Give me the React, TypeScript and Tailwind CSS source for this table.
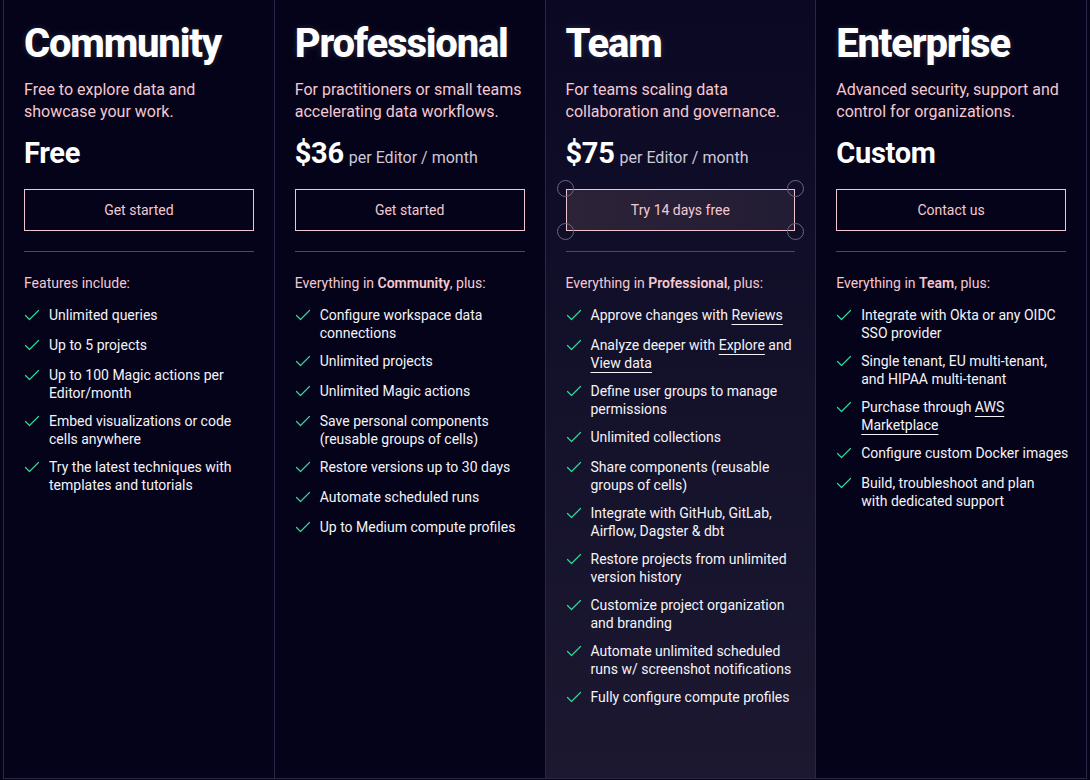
import type { ReactNode } from 'react';

type Plan = {
  name: string;
  blurb: [string, string];
  price: string;
  unit?: string;
  cta: string;
  lead: ReactNode;
  items: ReactNode[];
  featured?: boolean;
};

const Link = ({ children }: { children: ReactNode }) => (
  <span className="underline decoration-1 underline-offset-[4px]">{children}</span>
);

// line breaks follow the reference layout
const plans: Plan[] = [
  {
    name: 'Community',
    blurb: ['Free to explore data and', 'showcase your work.'],
    price: 'Free',
    cta: 'Get started',
    lead: <>Features include:</>,
    items: [
      'Unlimited queries',
      'Up to 5 projects',
      'Up to 100 Magic actions per\nEditor/month',
      'Embed visualizations or code\ncells anywhere',
      'Try the latest techniques with\ntemplates and tutorials',
    ],
  },
  {
    name: 'Professional',
    blurb: ['For practitioners or small teams', 'accelerating data workflows.'],
    price: '$36',
    unit: 'per Editor / month',
    cta: 'Get started',
    lead: (
      <>
        Everything in <b className="font-semibold">Community</b>, plus:
      </>
    ),
    items: [
      'Configure workspace data\nconnections',
      'Unlimited projects',
      'Unlimited Magic actions',
      'Save personal components\n(reusable groups of cells)',
      'Restore versions up to 30 days',
      'Automate scheduled runs',
      'Up to Medium compute profiles',
    ],
  },
  {
    name: 'Team',
    blurb: ['For teams scaling data', 'collaboration and governance.'],
    price: '$75',
    unit: 'per Editor / month',
    cta: 'Try 14 days free',
    featured: true,
    lead: (
      <>
        Everything in <b className="font-semibold">Professional</b>, plus:
      </>
    ),
    items: [
      <>
        Approve changes with <Link>Reviews</Link>
      </>,
      <>
        Analyze deeper with <Link>Explore</Link> and
        <br />
        <Link>View data</Link>
      </>,
      'Define user groups to manage\npermissions',
      'Unlimited collections',
      'Share components (reusable\ngroups of cells)',
      'Integrate with GitHub, GitLab,\nAirflow, Dagster & dbt',
      'Restore projects from unlimited\nversion history',
      'Customize project organization\nand branding',
      'Automate unlimited scheduled\nruns w/ screenshot notifications',
      'Fully configure compute profiles',
    ],
  },
  {
    name: 'Enterprise',
    blurb: ['Advanced security, support and', 'control for organizations.'],
    price: 'Custom',
    cta: 'Contact us',
    lead: (
      <>
        Everything in <b className="font-semibold">Team</b>, plus:
      </>
    ),
    items: [
      'Integrate with Okta or any OIDC\nSSO provider',
      'Single tenant, EU multi-tenant,\nand HIPAA multi-tenant',
      <>
        Purchase through <Link>AWS</Link>
        <br />
        <Link>Marketplace</Link>
      </>,
      'Configure custom Docker images',
      'Build, troubleshoot and plan\nwith dedicated support',
    ],
  },
];

function CheckMark() {
  return (
    <svg width="16" height="20" viewBox="0 0 16 20" fill="none" className="shrink-0 relative -top-[1px]">
      <path d="M1.5 10.5 L5.5 14.5 L14.5 5.5" stroke="#36d49b" strokeWidth="1.2" strokeLinecap="round" strokeLinejoin="round" />
    </svg>
  );
}

function Corner({ pos }: { pos: string }) {
  return <span className={`absolute w-[17px] h-[17px] rounded-full border border-[#6c6783] ${pos}`} />;
}

function PlanColumn({ plan }: { plan: Plan }) {
  return (
    <div
      className={`border-r border-[#2a2646] px-5 pt-5 ${
        plan.featured ? 'bg-gradient-to-b from-[#0a0823] via-[#14112b] to-[#1c1830]' : ''
      }`}
    >
      <h2 className="text-[40px] leading-[48px] font-extrabold tracking-[-0.03em] text-white [text-shadow:0_0_6px_rgba(255,255,255,0.15)]">
        {plan.name}
      </h2>
      <p className="mt-[11px] text-[16px] leading-[22px] text-[#f5c8d0] whitespace-nowrap">
        {plan.blurb[0]}
        <br />
        {plan.blurb[1]}
      </p>
      <div className="mt-[14px] h-8 flex items-baseline gap-[5px] text-white">
        <span className="text-[29px] leading-8 font-bold tracking-[-0.01em]">{plan.price}</span>
        {plan.unit && <span className="text-[16px] text-[#cdc9d9]">{plan.unit}</span>}
      </div>
      <div className="relative mt-5">
        <button
          type="button"
          className={`w-full h-[42px] border border-[#f1c5d0] text-[14px] text-[#f5c8d0] ${
            plan.featured ? 'bg-gradient-to-r from-[#2d2338] to-[#221c34]' : ''
          }`}
        >
          {plan.cta}
        </button>
        {plan.featured && (
          <>
            <Corner pos="-left-[9px] -top-[9px]" />
            <Corner pos="-right-[9px] -top-[9px]" />
            <Corner pos="-left-[9px] -bottom-[9px]" />
            <Corner pos="-right-[9px] -bottom-[9px]" />
          </>
        )}
      </div>
      <div className="mt-5 h-px bg-[#4a4572]" />
      <p className="mt-[21px] text-[14px] leading-5 text-[#f5c8d0]">{plan.lead}</p>
      <ul className="mt-[13px] -mr-4 flex flex-col gap-[10px]">
        {plan.items.map((item, i) => (
          <li key={i} className="flex items-start gap-[9px]">
            <CheckMark />
            <span className="text-[14px] leading-[18px] text-[#f4f3f8] whitespace-pre">{item}</span>
          </li>
        ))}
      </ul>
    </div>
  );
}

export default function App() {
  return (
    <div className="w-[1090px] h-[780px] overflow-hidden bg-[#04031a] font-['Roboto',sans-serif] antialiased">
      <div className="ml-[3px] w-[1084px] h-[779px] grid grid-cols-4 border-l border-b border-[#2a2646]">
        {plans.map((p) => (
          <PlanColumn key={p.name} plan={p} />
        ))}
      </div>
    </div>
  );
}
